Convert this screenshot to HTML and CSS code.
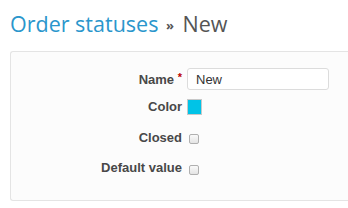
FILE: index.html
```html
<!DOCTYPE html>
<html lang="en">
<head>
  <meta charset="UTF-8" />
  <title>Order statuses - New</title>
  <link rel="stylesheet" href="styles.css">
</head>
<body>
  <h2 class="page-title"><a href="#">Order statuses</a> <span class="sep">&raquo;</span> New</h2>

  <form class="box tabular">
    <p class="row">
      <label for="status-name">Name <span class="required">*</span></label>
      <input type="text" id="status-name" class="text-field" value="New" />
    </p>
    <p class="row">
      <label>Color</label>
      <span class="swatch"></span>
    </p>
    <p class="row">
      <label for="status-closed">Closed</label>
      <input type="checkbox" id="status-closed" class="check" />
    </p>
    <p class="row">
      <label for="status-default">Default value</label>
      <input type="checkbox" id="status-default" class="check" />
    </p>
  </form>
</body>
</html>
```

FILE: styles.css
```css
body { margin: 0; background: #fff; font-family: "Liberation Sans", Arial, sans-serif; font-size: 13px; color: #333; }
.page-title { margin: 0; padding: 11px 0 0 10px; height: 40px; box-sizing: border-box; font-family: "Open Sans", sans-serif; font-size: 21.5px; font-weight: normal; line-height: 26px; color: #555; white-space: nowrap; }
.page-title a { color: #2a96cc; text-decoration: none; }
.page-title .sep { margin: 0 3px 0 2px; font-size: 13px; font-weight: bold; color: #555; vertical-align: 2px; }
.box { margin: 11px 0 0 10px; padding: 13px 0; background: #fcfcfc; border: 1px solid #e4e4e4; border-right: 0; border-radius: 3px 0 0 3px; }
.row { display: flex; align-items: flex-start; height: 30.5px; margin: 0; }
.row label { width: 171px; padding-top: 3.5px; text-align: right; font-weight: bold; line-height: 16px; color: #484848; }
.required { color: #bb0000; font-size: 11px; vertical-align: 3px; }
.text-field { margin: 3px 0 0 5px; width: 142px; height: 22px; box-sizing: border-box; padding: 0 8px; border: 1px solid #dcdcdc; border-radius: 3px; background: #fff; font-family: "Liberation Sans", Arial, sans-serif; font-size: 13px; color: #333; }
.swatch { display: block; margin: 3px 0 0 5px; width: 15px; height: 16px; box-sizing: border-box; border: 1px solid #c8c8c8; background: #00c3e7; }
.check { appearance: none; margin: 8px 0 0 7px; width: 10px; height: 10px; box-sizing: border-box; border: 1px solid #b0b0b0; border-radius: 2px; background: linear-gradient(#fafafa, #e4e4e4); }
```
